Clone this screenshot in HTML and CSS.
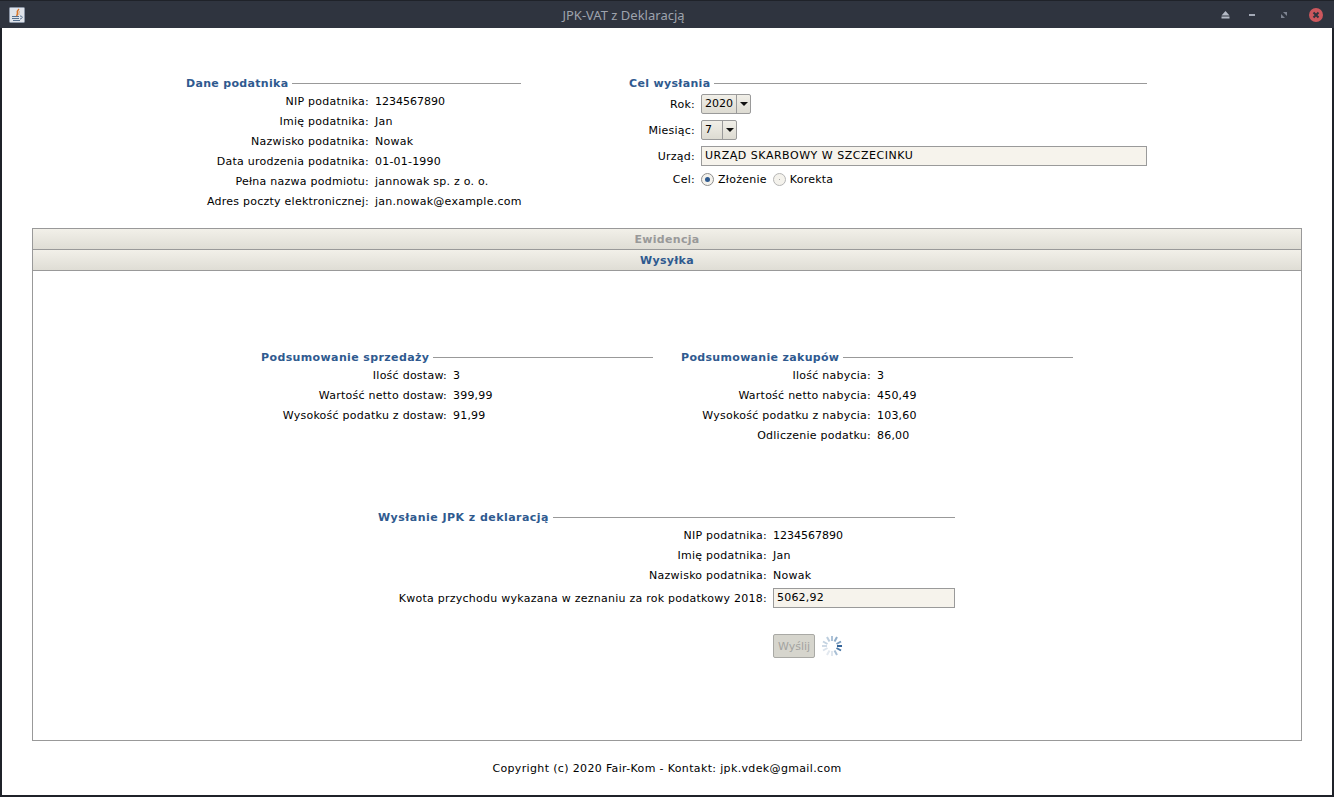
FILE: index.html
```html
<!DOCTYPE html>
<html lang="pl">
<head>
    <meta charset="utf-8">
    <meta name="viewport" content="width=device-width, initial-scale=1.0">
    <title>JPK-VAT z Deklaracją</title>
    <link rel="stylesheet" href="styles.css">
</head>
<body>
    <div class="window">
        <header class="titlebar">
            <span class="app-icon">
                <svg width="16" height="16" viewBox="0 0 16 16">
                    <rect x="0.5" y="0.5" width="15" height="15" rx="1" fill="#dfe3ea" stroke="#8b95a6"/>
                    <path d="M10 2 C6.5 5 10 6 7.5 9" fill="none" stroke="#d9762b" stroke-width="1.5"/>
                    <path d="M11 4.5 C9 5.5 10 6.5 10 8" fill="none" stroke="#e8a66e" stroke-width="1"/>
                    <path d="M3 9.5 H10 M3 11.5 H10 M4 13.5 H11" stroke="#56708f" stroke-width="1"/>
                    <path d="M11 9 C14 9 14 11.5 11 12" fill="none" stroke="#56708f" stroke-width="1"/>
                </svg>
            </span>
            <span class="window-title">JPK-VAT z Deklaracją</span>
            <div class="window-buttons">
                <svg class="win-btn" width="9" height="8" viewBox="0 0 9 8"><path d="M4.5 0 L8.5 4.5 H0.5 Z M0.5 5.5 H8.5 V7.5 H0.5 Z" fill="#b4bac6"/></svg>
                <svg class="win-btn" width="6" height="2" viewBox="0 0 6 2"><rect width="6" height="2" fill="#a3a9b6"/></svg>
                <svg class="win-btn" width="6" height="6" viewBox="0 0 6 6"><path d="M2 0 H6 V4 Z M0 2 L4 6 H0 Z" fill="#7d8391"/></svg>
                <span class="close-btn">
                    <svg width="14" height="14" viewBox="0 0 14 14"><path d="M4.5 4.5 L9.5 9.5 M9.5 4.5 L4.5 9.5" stroke="#2f343f" stroke-width="2"/></svg>
                </span>
            </div>
        </header>

        <main class="content">
            <div class="top-row">
                <section class="group group-taxpayer">
                    <h2 class="group-title"><span>Dane podatnika</span></h2>
                    <div class="form">
                        <span class="label">NIP podatnika:</span><span class="num">1234567890</span>
                        <span class="label">Imię podatnika:</span><span>Jan</span>
                        <span class="label">Nazwisko podatnika:</span><span>Nowak</span>
                        <span class="label">Data urodzenia podatnika:</span><span class="amount">01-01-1990</span>
                        <span class="label">Pełna nazwa podmiotu:</span><span>jannowak sp. z o. o.</span>
                        <span class="label">Adres poczty elektronicznej:</span><span>jan.nowak@example.com</span>
                    </div>
                </section>
                <section class="group group-target">
                    <h2 class="group-title"><span>Cel wysłania</span></h2>
                    <div class="form form-target">
                        <span class="label">Rok:</span>
                        <div class="combo combo-year"><span class="combo-value num">2020</span><span class="combo-arrow"></span></div>
                        <span class="label">Miesiąc:</span>
                        <div class="combo combo-month"><span class="combo-value num">7</span><span class="combo-arrow"></span></div>
                        <span class="label">Urząd:</span>
                        <div class="field caps">URZĄD SKARBOWY W SZCZECINKU</div>
                        <span class="label">Cel:</span>
                        <div class="radios">
                            <span class="radio radio-on"></span><span>Złożenie</span>
                            <span class="radio radio-off"></span><span>Korekta</span>
                        </div>
                    </div>
                </section>
            </div>

            <div class="accordion">
                <div class="acc-head acc-head-off">Ewidencja</div>
                <div class="acc-head">Wysyłka</div>
                <div class="acc-body">
                    <div class="summary-row">
                        <section class="group group-sales">
                            <h2 class="group-title"><span>Podsumowanie sprzedaży</span></h2>
                            <div class="form">
                                <span class="label">Ilość dostaw:</span><span class="num">3</span>
                                <span class="label">Wartość netto dostaw:</span><span class="amount">399,99</span>
                                <span class="label">Wysokość podatku z dostaw:</span><span class="amount">91,99</span>
                            </div>
                        </section>
                        <section class="group group-purchases">
                            <h2 class="group-title"><span>Podsumowanie zakupów</span></h2>
                            <div class="form">
                                <span class="label">Ilość nabycia:</span><span class="num">3</span>
                                <span class="label">Wartość netto nabycia:</span><span class="amount">450,49</span>
                                <span class="label">Wysokość podatku z nabycia:</span><span class="amount">103,60</span>
                                <span class="label">Odliczenie podatku:</span><span class="amount">86,00</span>
                            </div>
                        </section>
                    </div>
                    <section class="group group-send">
                        <h2 class="group-title"><span>Wysłanie JPK z deklaracją</span></h2>
                        <div class="form">
                            <span class="label">NIP podatnika:</span><span class="num">1234567890</span>
                            <span class="label">Imię podatnika:</span><span>Jan</span>
                            <span class="label">Nazwisko podatnika:</span><span>Nowak</span>
                            <span class="label">Kwota przychodu wykazana w zeznaniu za rok podatkowy 2018:</span>
                            <div class="field amount">5062,92</div>
                            <span></span>
                            <div class="send-row">
                                <button class="send-btn" disabled>Wyślij</button>
                                <svg class="spinner" width="22" height="22" viewBox="0 0 22 22" fill="none" stroke-width="2">
                                    <path d="M21 11 H16" stroke="#35659a"/>
                                    <path d="M20 15.5 L15.5 13" stroke="#4a78a6"/>
                                    <path d="M16 20 L13.5 15.5" stroke="#a9bfd5"/>
                                    <path d="M11 21 V16" stroke="#dfe6ee"/>
                                    <path d="M6 20 L8.5 15.5" stroke="#e2e8ef"/>
                                    <path d="M2 15.5 L6.5 13" stroke="#dbe3ec"/>
                                    <path d="M1 11 H6" stroke="#cfdae6"/>
                                    <path d="M2 6.5 L6.5 9" stroke="#c4d3e1"/>
                                    <path d="M6 2 L8.5 6.5" stroke="#bccddd"/>
                                    <path d="M11 1 V6" stroke="#adc2d7"/>
                                    <path d="M16 2 L13.5 6.5" stroke="#90adc9"/>
                                    <path d="M20 6.5 L15.5 9" stroke="#7a9cbd"/>
                                </svg>
                            </div>
                        </div>
                    </section>
                </div>
            </div>

            <footer class="copyright">Copyright (c) 2020 Fair-Kom - Kontakt: jpk.vdek@gmail.com</footer>
        </main>
    </div>
</body>
</html>
```

FILE: styles.css
```css
html, body {
    margin: 0;
    height: 100%;
}
body {
    background-color: #fff;
    color: #000;
    font-family: "DejaVu Sans", sans-serif;
    font-size: 11px;
    letter-spacing: 0.25px;
    overflow: hidden;
}
.num {
    letter-spacing: 0;
}
.amount {
    letter-spacing: 0.2px;
}
.caps {
    letter-spacing: 0.52px;
}
.window {
    display: flex;
    flex-direction: column;
    height: 797px;
    box-sizing: border-box;
    border: solid #1f2229;
    border-width: 0 2px 2px 2px;
}
.titlebar {
    display: flex;
    align-items: center;
    flex-shrink: 0;
    height: 28px;
    margin: 0 -2px;
    padding: 0 11px 0 9px;
    background-color: #2f343f;
    border-top: 1px solid #1f2229;
    box-sizing: border-box;
}
.app-icon {
    display: flex;
    width: 16px;
    height: 16px;
}
.window-title {
    flex: 1;
    text-align: center;
    font-family: "Noto Sans", sans-serif;
    font-size: 13px;
    letter-spacing: 0;
    color: #9ea3ad;
    padding-left: 1px;
}
.window-buttons {
    display: flex;
    align-items: center;
}
.win-btn {
    display: block;
}
.win-btn:nth-child(1) {
    margin-right: 19px;
}
.win-btn:nth-child(2) {
    margin-right: 26px;
}
.close-btn {
    display: flex;
    align-items: center;
    justify-content: center;
    width: 14px;
    height: 14px;
    margin-left: 22px;
    border-radius: 50%;
    background-color: #cc575d;
}
.content {
    display: flex;
    flex-direction: column;
    flex: 1;
    padding: 0 30px;
}
.top-row {
    display: flex;
    padding: 48px 0 0 154px;
    height: 152px;
}
.group-title {
    display: flex;
    align-items: center;
    margin: 0;
    height: 14px;
    font-size: 11px;
    font-weight: bold;
    color: #2f5a8f;
    letter-spacing: 0.32px;
}
.group-title::after {
    content: "";
    flex: 1;
    height: 1px;
    margin-left: 4px;
    background-color: #999;
}
.form {
    display: grid;
    grid-template-columns: max-content max-content;
    justify-content: end;
    column-gap: 6px;
    grid-auto-rows: 20px;
    align-items: center;
    margin-top: 1px;
}
.label {
    text-align: right;
}
.group-taxpayer {
    width: 335px;
    flex-shrink: 0;
}
.group-taxpayer .form {
    grid-template-columns: 183px 146px;
}
.group-target {
    width: 518px;
    margin-left: 108px;
}
.form-target {
    grid-template-columns: 66px 446px;
    grid-template-rows: 26px 26px 26px 20px;
}
.combo {
    display: flex;
    box-sizing: border-box;
    height: 20px;
    background: linear-gradient(#f1efe8, #dddbd2);
    border: 1px solid #9a9a9a;
    border-radius: 2px;
}
.combo-year {
    width: 50px;
}
.combo-month {
    width: 36px;
}
.combo-value {
    flex: 1;
    padding-left: 3px;
    line-height: 18px;
}
.combo-arrow {
    position: relative;
    width: 13px;
    border-left: 1px solid #9a9a9a;
}
.combo-arrow::after {
    content: "";
    position: absolute;
    left: 3px;
    top: 7px;
    border: solid transparent;
    border-width: 4px 4px 0;
    border-top-color: #111;
}
.field {
    box-sizing: border-box;
    height: 20px;
    padding-left: 3px;
    line-height: 18px;
    background-color: #f6f3ec;
    border: 1px solid #9a9a9a;
}
.radios {
    display: flex;
    align-items: center;
    gap: 4px;
}
.radio {
    position: relative;
    box-sizing: border-box;
    width: 13px;
    height: 13px;
    border: 1px solid #8f8f8f;
    border-radius: 50%;
    background-color: #f4f2ec;
}
.radio-on::after {
    content: "";
    position: absolute;
    left: 3px;
    top: 3px;
    width: 5px;
    height: 5px;
    border-radius: 50%;
    background-color: #2f5a8f;
}
.radio-off {
    margin-left: 2px;
    border-color: #b5b5b5;
}
.radio-off::after {
    content: "";
    position: absolute;
    left: 5px;
    top: 5px;
    width: 1px;
    height: 1px;
    background-color: #aaa;
}
.accordion {
    display: flex;
    flex-direction: column;
    height: 513px;
    box-sizing: border-box;
    border: 1px solid #999;
}
.acc-head {
    flex-shrink: 0;
    box-sizing: border-box;
    height: 21px;
    padding-top: 1px;
    line-height: 20px;
    text-align: center;
    font-weight: bold;
    color: #2f5a8f;
    letter-spacing: 0.3px;
    background: linear-gradient(#f2f0e9, #dfddd5);
    border-bottom: 1px solid #999;
}
.acc-head-off {
    color: #999;
}
.acc-body {
    flex: 1;
    display: flex;
    flex-direction: column;
    padding: 79px 0 0 228px;
}
.summary-row {
    display: flex;
    gap: 28px;
    height: 160px;
}
.group-sales {
    width: 392px;
}
.group-sales .group-title {
    letter-spacing: 0.38px;
}
.group-sales .form {
    grid-template-columns: 186px 1fr;
}
.group-purchases {
    width: 392px;
}
.group-purchases .form {
    grid-template-columns: 190px 1fr;
}
.group-send {
    width: 577px;
    margin-left: 117px;
}
.group-send .group-title {
    letter-spacing: 0.46px;
}
.group-send .form {
    grid-template-columns: 389px 182px;
    grid-template-rows: 20px 20px 20px 26px auto;
}
.send-row {
    display: flex;
    align-items: center;
    gap: 6px;
    margin-top: 23px;
}
.send-btn {
    width: 42px;
    height: 24px;
    padding: 0;
    font: inherit;
    color: #a3a3a0;
    background-color: #d6d5cd;
    border: 1px solid #a9a9a5;
    border-radius: 2px;
}
.copyright {
    text-align: center;
    padding-top: 21px;
    line-height: 14px;
    letter-spacing: 0.35px;
}
```
